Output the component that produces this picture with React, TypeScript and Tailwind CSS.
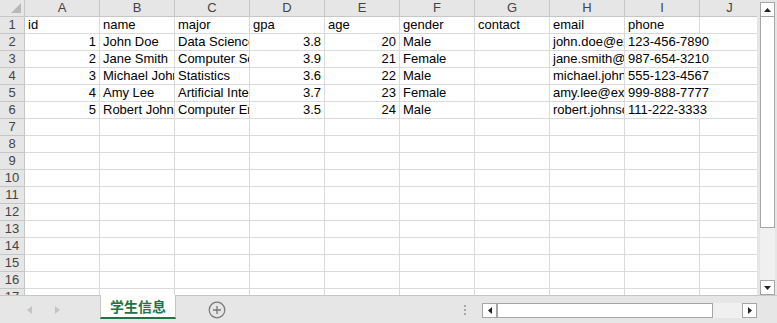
const COLS = ["A", "B", "C", "D", "E", "F", "G", "H", "I", "J"];

const ROWS: (string | number)[][] = [
  ["id", "name", "major", "gpa", "age", "gender", "contact", "email", "phone"],
  [1, "John Doe", "Data Science", 3.8, 20, "Male", "", "john.doe@example.com", "123-456-7890"],
  [2, "Jane Smith", "Computer Science", 3.9, 21, "Female", "", "jane.smith@example.com", "987-654-3210"],
  [3, "Michael Johnson", "Statistics", 3.6, 22, "Male", "", "michael.johnson@example.com", "555-123-4567"],
  [4, "Amy Lee", "Artificial Intelligence", 3.7, 23, "Female", "", "amy.lee@example.com", "999-888-7777"],
  [5, "Robert Johnson", "Computer Engineering", 3.5, 24, "Male", "", "robert.johnson@example.com", "111-222-3333"],
];

const ROW_COUNT = 17;

function Cell({ value, col, row }: { value: string | number | undefined; col: number; row: number }) {
  const isNum = typeof value === "number";
  const phoneOverflow = col === 8 && row >= 1 && row <= 5;
  return (
    <div
      className={
        "h-[17px] border-b border-[#dadada] px-[3px] text-[13px] leading-[16px] whitespace-nowrap text-black " +
        (phoneOverflow ? "overflow-visible relative z-10 " : "overflow-hidden border-r ") +
        (isNum ? "text-right" : "text-left")
      }
    >
      {isNum ? (value as number).toFixed(col === 3 ? 1 : 0) : value}
    </div>
  );
}

function Grid() {
  return (
    <div className="w-[757px] h-[295px] overflow-hidden bg-white">
      <div className="grid grid-cols-[25px_repeat(9,75px)_60px]">
        {/* corner */}
        <div className="relative h-[17px] bg-[#e6e6e6] border-r border-b border-[#c6c6c6]">
          <svg className="absolute right-[3px] bottom-[3px]" width="10" height="10" viewBox="0 0 10 10">
            <path d="M10 0 L10 10 L0 10 Z" fill="#b9b9b9" />
          </svg>
        </div>
        {COLS.map((c) => (
          <div
            key={c}
            className="h-[17px] bg-[#e6e6e6] border-r border-b border-[#c6c6c6] text-center text-[13px] leading-[16px] text-[#444]"
          >
            {c}
          </div>
        ))}
        {Array.from({ length: ROW_COUNT }).map((_, r) => (
          <div key={r} className="contents">
            <div className="h-[17px] bg-[#e6e6e6] border-r border-b border-[#c6c6c6] text-center text-[13px] leading-[16px] text-[#444]">
              {r + 1}
            </div>
            {COLS.map((c, ci) => (
              <Cell key={c} value={ROWS[r]?.[ci]} col={ci} row={r} />
            ))}
          </div>
        ))}
      </div>
    </div>
  );
}

function VScroll() {
  return (
    <div className="w-[20px] h-[295px] bg-[#e6e6e6] flex flex-col items-center pt-[2px]">
      <div className="w-[15px] h-[15px] bg-white border border-[#a6a6a6] flex items-center justify-center">
        <svg width="7" height="4" viewBox="0 0 7 4">
          <path d="M0 4 L3.5 0 L7 4 Z" fill="#222" />
        </svg>
      </div>
      <div className="w-[15px] h-[211px] bg-white border border-[#a6a6a6] border-t-0"></div>
      <div className="w-[15px] flex-1 bg-[#f0f0f0]"></div>
      <div className="w-[15px] h-[15px] bg-white border border-[#a6a6a6] flex items-center justify-center">
        <svg width="7" height="4" viewBox="0 0 7 4">
          <path d="M0 0 L7 0 L3.5 4 Z" fill="#222" />
        </svg>
      </div>
    </div>
  );
}

function TabBar() {
  return (
    <div className="h-[28px] bg-[#e6e6e6] border-t border-[#c6c6c6] flex items-start text-[#222]">
      <div className="w-[100px] h-full flex items-center">
        <svg className="ml-[27px]" width="5" height="8" viewBox="0 0 5 8">
          <path d="M5 0 L0 4 L5 8 Z" fill="#c4c4c4" />
        </svg>
        <svg className="ml-[23px]" width="5" height="8" viewBox="0 0 5 8">
          <path d="M0 0 L5 4 L0 8 Z" fill="#c4c4c4" />
        </svg>
      </div>
      <div className="w-[76px] h-[24px] -mt-px bg-white border-x border-[#c6c6c6] border-b-2 border-b-[#217346] flex items-center justify-center text-[14px] font-bold text-[#217346] font-['Noto_Sans_CJK_SC',sans-serif]">
        学生信息
      </div>
      <div className="h-full flex items-center ml-[32px]">
        <svg width="18" height="18" viewBox="0 0 18 18">
          <circle cx="9" cy="9" r="7.8" fill="none" stroke="#777" strokeWidth="1.2" />
          <path d="M9 5 V13 M5 9 H13" stroke="#777" strokeWidth="1.3" />
        </svg>
      </div>
      <div className="h-full flex flex-col items-center justify-center gap-[2px] ml-[238px]">
        <div className="w-[2px] h-[2px] bg-[#a8a8a8]"></div>
        <div className="w-[2px] h-[2px] bg-[#a8a8a8]"></div>
        <div className="w-[2px] h-[2px] bg-[#a8a8a8]"></div>
      </div>
      <div className="ml-[16px] mt-[7px] flex h-[15px]">
        <div className="w-[15px] h-[15px] bg-white border border-[#a6a6a6] flex items-center justify-center">
          <svg width="4" height="7" viewBox="0 0 4 7">
            <path d="M4 0 L0 3.5 L4 7 Z" fill="#222" />
          </svg>
        </div>
        <div className="w-[216px] h-[15px] bg-white border border-[#a6a6a6] border-l-[#a6a6a6]"></div>
        <div className="w-[29px] h-[15px] bg-[#f0f0f0]"></div>
        <div className="w-[15px] h-[15px] bg-white border border-[#a6a6a6] flex items-center justify-center">
          <svg width="4" height="7" viewBox="0 0 4 7">
            <path d="M0 0 L4 3.5 L0 7 Z" fill="#222" />
          </svg>
        </div>
      </div>
    </div>
  );
}

export default function App() {
  return (
    <div className="w-[777px] h-[323px] overflow-hidden bg-[#e6e6e6] font-['Liberation_Sans',Arial,sans-serif]">
      <div className="flex">
        <Grid />
        <VScroll />
      </div>
      <TabBar />
    </div>
  );
}
